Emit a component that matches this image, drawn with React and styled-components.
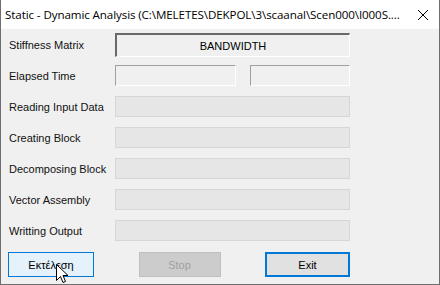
import styled, { createGlobalStyle } from 'styled-components';

const GlobalStyle = createGlobalStyle`
  html, body {
    margin: 0;
    padding: 0;
    background: #f0f0f0;
  }
  body {
    font-family: Tahoma, "DejaVu Sans", "Liberation Sans", sans-serif;
  }
`;

const Window = styled.div`
  position: relative;
  width: 440px;
  height: 285px;
  box-sizing: border-box;
  border: 1px solid #6e6e6e;
  border-top: none;
  background: #f0f0f0;
  display: flex;
  flex-direction: column;
  overflow: hidden;
`;

const TitleBar = styled.div`
  height: 29px;
  flex: none;
  background: #ffffff;
  display: flex;
  align-items: center;
  justify-content: space-between;
  padding: 0 10px 0 4px;
  font-family: "Open Sans", "Noto Sans", sans-serif;
  font-size: 11.6px;
  color: #000;
  letter-spacing: -0.1px;
`;

const Body = styled.div`
  flex: 1;
  display: flex;
  flex-direction: column;
  padding: 4px 0 0 7px;
  font-family: "Liberation Sans", Arial, sans-serif;
  font-size: 11px;
  color: #000;
`;

const Rows = styled.div`
  display: flex;
  flex-direction: column;
  gap: 10px;
`;

const Row = styled.div`
  display: grid;
  grid-template-columns: 107px 235px;
  align-items: center;
  height: ${p => p.$h || 21}px;
  margin-top: ${p => p.$pull ? `-${p.$pull}px` : '0'};
`;

const Label = styled.div`
  padding-left: 1px;
  color: #111;
`;

const Sunken = styled.div`
  box-sizing: border-box;
  height: ${p => p.$h || 21}px;
  width: ${p => p.$w ? `${p.$w}px` : '100%'};
  border-top: ${p => p.$deep ? '2px solid #696969' : '1px solid #a0a0a0'};
  border-left: ${p => p.$deep ? '2px solid #696969' : '1px solid #a0a0a0'};
  border-right: 1px solid #ffffff;
  border-bottom: 1px solid #ffffff;
  background: #f0f0f0;
  display: flex;
  align-items: center;
  justify-content: center;
`;

const Bar = styled.div`
  box-sizing: border-box;
  height: 21px;
  width: 100%;
  border: 1px solid #d6d6d6;
  background: #e6e6e6;
`;

const Pair = styled.div`
  display: flex;
  justify-content: space-between;
`;

const Buttons = styled.div`
  display: grid;
  grid-template-columns: 86px 82px 85px;
  column-gap: 43px;
  margin-top: 11px;
  width: 342px;
  justify-content: space-between;
`;

const Button = styled.div`
  box-sizing: border-box;
  height: 25px;
  display: flex;
  align-items: center;
  justify-content: center;
  font-size: 11px;
  background: ${p => p.$hover ? '#e5f1fb' : p.$disabled ? '#cccccc' : '#e1e1e1'};
  color: ${p => p.$disabled ? '#a0a0a0' : '#000'};
  border: ${p => p.$focus ? '2px solid #0078d7' : p.$hover ? '1px solid #0078d7' : '1px solid #bfbfbf'};
`;

const Cursor = styled.svg`
  position: absolute;
  left: 55px;
  top: 264px;
  pointer-events: none;
`;

export default function App() {
  return (
    <>
      <GlobalStyle />
      <Window>
        <TitleBar>
          <span>Static - Dynamic Analysis (C:\MELETES\DEKPOL\3\scaanal\Scen000\I000S....</span>
          <svg width="12" height="12" viewBox="0 0 12 12">
            <path d="M1 1 L11 11 M11 1 L1 11" stroke="#000" strokeWidth="1" />
          </svg>
        </TitleBar>
        <Body>
          <Rows>
            <Row $h={24}>
              <Label>Stiffness Matrix</Label>
              <Sunken $h={24} $deep>BANDWIDTH</Sunken>
            </Row>
            <Row $pull={2}>
              <Label>Elapsed Time</Label>
              <Pair>
                <Sunken $w={121} />
                <Sunken $w={100} />
              </Pair>
            </Row>
            {['Reading Input Data', 'Creating Block', 'Decomposing Block', 'Vector Assembly', 'Writting Output'].map(t => (
              <Row key={t}>
                <Label>{t}</Label>
                <Bar />
              </Row>
            ))}
          </Rows>
          <Buttons>
            <Button $hover>Εκτέλεση</Button>
            <Button $disabled>Stop</Button>
            <Button $focus>Exit</Button>
          </Buttons>
        </Body>
        <Cursor width="13" height="21" viewBox="0 0 13 21">
          <path d="M0.5 0.5 L0.5 16.5 L4.5 12.5 L7 18.5 L9.5 17.5 L7 11.5 L12 11.5 Z" fill="#fff" stroke="#000" strokeWidth="1" />
        </Cursor>
      </Window>
    </>
  );
}
